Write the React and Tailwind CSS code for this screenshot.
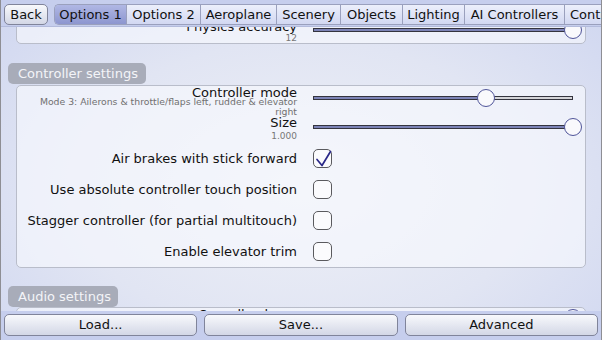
import React from "react";

function Slider({ value, className = "" }) {
  return (
    <div className={"relative w-[260px] h-[18px] shrink-0 " + className}>
      <div className="absolute left-0 right-0 top-[7px] h-[4px] border border-[#34343f] bg-[#d4d4d8] flex">
        <div className="h-full bg-[#7c83b6]" style={{ width: `${value * 100}%` }} />
      </div>
      <div
        className="absolute top-0 w-[18px] h-[18px] rounded-full border border-[#4f5499] bg-[#f9f9fc]"
        style={{ left: `calc(${value * 100}% - 9px)` }}
      />
    </div>
  );
}

function CheckRow({ label, checked }) {
  return (
    <div className="flex items-center h-[31px]">
      <div className="w-[280px] text-right text-[13px] leading-[15px] text-[#111]">{label}</div>
      <div className="relative ml-[16px] w-[19px] h-[19px] rounded-[5px] border border-[#5a5a5e] bg-[#fbfbfd]">
        {checked && (
          <svg className="absolute -left-px -top-px" width="19" height="19" viewBox="0 0 19 19">
            <polyline
              points="4,10.5 9,16.5 17.5,2.5"
              fill="none"
              stroke="#2a2888"
              strokeWidth="1.7"
              strokeLinecap="round"
              strokeLinejoin="round"
            />
          </svg>
        )}
      </div>
    </div>
  );
}

function Panel({ children, className = "" }) {
  return (
    <div className={"mx-[15px] border border-[#b9bdca] rounded-[5px] bg-[rgba(248,249,253,0.65)] " + className}>
      {children}
    </div>
  );
}

function Header({ children, className = "" }) {
  return (
    <div
      className={
        "ml-[7px] h-[21px] rounded-[5px] bg-[#a8acb9] text-[#f3f4f8] text-[13px] leading-[21px] pl-[10px] " +
        className
      }
    >
      {children}
    </div>
  );
}

const tabs = [
  { name: "Options 1", w: "w-[71px]", sel: true },
  { name: "Options 2", w: "w-[74px]" },
  { name: "Aeroplane", w: "w-[76px]" },
  { name: "Scenery", w: "w-[64px]" },
  { name: "Objects", w: "w-[62px]" },
  { name: "Lighting", w: "w-[62px]" },
  { name: "AI Controllers", w: "w-[100px]" },
  { name: "Controls", w: "px-[5px]" },
];

export default function App() {
  return (
    <div className="w-[602px] h-[340px] overflow-hidden flex flex-col border-x border-[#8e8e94] bg-[radial-gradient(ellipse_at_50%_55%,#eef0f7_0%,#e1e5f3_55%,#cfd6f0_100%)] font-['DejaVu_Sans',sans-serif] text-[#111]">
      {/* Tab bar */}
      <div className="h-[27px] shrink-0 flex items-start pt-[4px] pl-[3px] bg-[#c6ceed] border-b border-[#b3bbdc]">
        <div className="w-[44px] h-[21px] shrink-0 rounded-[5px] border border-[#80849a] bg-gradient-to-b from-[#f8f9fc] to-[#d3d7e6] text-[13px] leading-[19px] text-center">
          Back
        </div>
        <div className="ml-[6px] flex h-[21px] shrink-0 rounded-l-[5px] border border-r-0 border-[#9aa0bd] overflow-hidden">
          {tabs.map((t, i) => (
            <div
              key={t.name}
              className={
                "h-full shrink-0 whitespace-nowrap text-center text-[13px] leading-[19px] " +
                t.w +
                " " +
                (i > 0 ? "border-l border-[#9aa0bd] " : "") +
                (t.sel
                  ? "bg-gradient-to-b from-[#b0b7e4] to-[#8d96cf]"
                  : "bg-gradient-to-b from-[#eceffb] to-[#d2d8f2]")
              }
            >
              {t.name}
            </div>
          ))}
        </div>
      </div>

      {/* Scroll area */}
      <div className="flex-1 overflow-hidden">
        <div className="-mt-[8px]">
          <Panel>
            <div className="flex items-start">
              <div className="w-[280px] text-right">
                <div className="text-[13px] leading-[13px]">Physics accuracy</div>
                <div className="text-[9px] leading-[10px] text-[#777]">12</div>
              </div>
              <Slider value={1} className="ml-[16px] mt-[1px]" />
            </div>
          </Panel>

          <Header className="mt-[19px] w-[138px]">Controller settings</Header>
          <Panel className="mt-px">
            <div className="flex items-start">
              <div className="w-[280px] text-right">
                <div className="text-[13px] leading-[13px]">Controller mode</div>
                <div className="-mt-[2px] text-[9.3px] leading-[10px] text-[#707070]">
                  Mode 3: Ailerons &amp; throttle/flaps left, rudder &amp; elevator right
                </div>
              </div>
              <Slider value={0.665} className="ml-[16px] mt-[3px]" />
            </div>
            <div className="-mt-[1px] flex items-start">
              <div className="w-[280px] text-right">
                <div className="text-[13px] leading-[13px]">Size</div>
                <div className="mt-[2px] text-[9px] leading-[10px] text-[#777]">1.000</div>
              </div>
              <Slider value={1} className="ml-[16px] mt-[2px]" />
            </div>
            <div className="mt-[2px]">
              <CheckRow label="Air brakes with stick forward" checked />
              <CheckRow label="Use absolute controller touch position" />
              <CheckRow label="Stagger controller (for partial multitouch)" />
              <CheckRow label="Enable elevator trim" />
            </div>
          </Panel>

          <Header className="mt-[18px] w-[110px]">Audio settings</Header>
          <Panel>
            <div className="flex items-start">
              <div className="w-[280px] text-right">
                <div className="text-[13px] leading-[13px]">Overall volume</div>
                <div className="text-[9px] leading-[10px] text-[#777]">1.000</div>
              </div>
              <Slider value={1} className="ml-[16px] mt-[1px]" />
            </div>
          </Panel>
        </div>
      </div>

      {/* Bottom bar */}
      <div className="h-[29px] shrink-0 flex gap-[7px] px-[3px] pt-[3px] bg-[#c6ceed]">
        {["Load...", "Save...", "Advanced"].map((b) => (
          <div
            key={b}
            className="flex-1 h-[22px] rounded-[5px] border border-[#80849a] bg-gradient-to-b from-[#f8f9fc] to-[#d3d7e6] text-[13px] leading-[20px] text-center"
          >
            {b}
          </div>
        ))}
      </div>
    </div>
  );
}
